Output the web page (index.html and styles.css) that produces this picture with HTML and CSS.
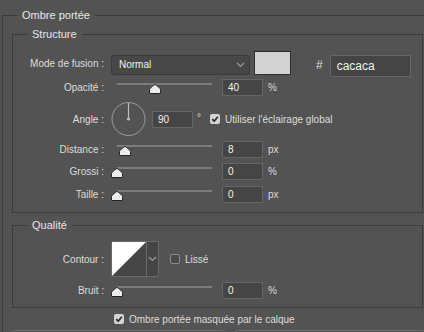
FILE: index.html
```html
<!DOCTYPE html>
<html lang="fr">
<head>
    <meta charset="UTF-8">
    <title>Style de calque - Ombre portée</title>
    <link rel="stylesheet" href="styles.css">
</head>
<body>
    <fieldset class="group outer">
        <legend>Ombre portée</legend>

        <fieldset class="group inner structure">
            <legend>Structure</legend>

            <div class="row row-mode">
                <label class="lbl">Mode de fusion :</label>
                <div class="select">
                    <span>Normal</span>
                    <svg class="chev" width="9" height="6" viewBox="0 0 9 6"><path d="M1 1 L4.5 4.5 L8 1" fill="none" stroke="#9a9a9a" stroke-width="1.2"/></svg>
                </div>
                <div class="swatch"></div>
                <span class="hash">#</span>
                <div class="field hex">cacaca</div>
            </div>

            <div class="row row-opacity">
                <label class="lbl">Opacité :</label>
                <div class="slider">
                    <div class="track">
                        <svg class="thumb" style="left: 40%" width="12" height="10" viewBox="0 0 12 10"><path d="M6 0.5 C7 0.5 11.5 4.5 11.5 5.5 V9 Q11.5 9.5 11 9.5 H1 Q0.5 9.5 0.5 9 V5.5 C0.5 4.5 5 0.5 6 0.5 Z" fill="#ececec" stroke="#262626"/></svg>
                    </div>
                </div>
                <div class="field num">40</div>
                <span class="unit">%</span>
            </div>

            <div class="row row-angle">
                <label class="lbl">Angle :</label>
                <svg class="dial" width="35" height="36" viewBox="0 0 35 36">
                    <circle cx="17.5" cy="18" r="16.5" fill="none" stroke="#9c9c9c" stroke-width="1"/>
                    <line x1="17.5" y1="18" x2="17.5" y2="2" stroke="#bdbdbd" stroke-width="1.2"/>
                    <circle cx="17.5" cy="18" r="1.6" fill="#bdbdbd"/>
                </svg>
                <div class="field num">90</div>
                <span class="deg">°</span>
                <span class="check on">
                    <svg width="10" height="10" viewBox="0 0 10 10"><path d="M2.2 5.2 L4.2 7.2 L7.8 2.8" fill="none" stroke="#303030" stroke-width="1.8"/></svg>
                </span>
                <span class="check-label">Utiliser l'éclairage global</span>
            </div>

            <div class="row row-distance">
                <label class="lbl">Distance :</label>
                <div class="slider">
                    <div class="track">
                        <svg class="thumb" style="left: 8%" width="12" height="10" viewBox="0 0 12 10"><path d="M6 0.5 C7 0.5 11.5 4.5 11.5 5.5 V9 Q11.5 9.5 11 9.5 H1 Q0.5 9.5 0.5 9 V5.5 C0.5 4.5 5 0.5 6 0.5 Z" fill="#ececec" stroke="#262626"/></svg>
                    </div>
                </div>
                <div class="field num">8</div>
                <span class="unit">px</span>
            </div>

            <div class="row">
                <label class="lbl">Grossi :</label>
                <div class="slider">
                    <div class="track">
                        <svg class="thumb" style="left: 0%" width="12" height="10" viewBox="0 0 12 10"><path d="M6 0.5 C7 0.5 11.5 4.5 11.5 5.5 V9 Q11.5 9.5 11 9.5 H1 Q0.5 9.5 0.5 9 V5.5 C0.5 4.5 5 0.5 6 0.5 Z" fill="#ececec" stroke="#262626"/></svg>
                    </div>
                </div>
                <div class="field num">0</div>
                <span class="unit">%</span>
            </div>

            <div class="row row-size">
                <label class="lbl">Taille :</label>
                <div class="slider">
                    <div class="track">
                        <svg class="thumb" style="left: 0%" width="12" height="10" viewBox="0 0 12 10"><path d="M6 0.5 C7 0.5 11.5 4.5 11.5 5.5 V9 Q11.5 9.5 11 9.5 H1 Q0.5 9.5 0.5 9 V5.5 C0.5 4.5 5 0.5 6 0.5 Z" fill="#ececec" stroke="#262626"/></svg>
                    </div>
                </div>
                <div class="field num">0</div>
                <span class="unit">px</span>
            </div>
        </fieldset>

        <fieldset class="group inner quality">
            <legend>Qualité</legend>

            <div class="row row-contour">
                <label class="lbl">Contour :</label>
                <div class="contour">
                    <svg class="curve" width="34" height="34" viewBox="0 0 34 34">
                        <rect width="34" height="34" fill="#464646"/>
                        <polygon points="0,0 34,0 0,34" fill="#ffffff"/>
                    </svg>
                    <div class="contour-arrow">
                        <svg width="9" height="6" viewBox="0 0 9 6"><path d="M1 1 L4.5 4.5 L8 1" fill="none" stroke="#9a9a9a" stroke-width="1.2"/></svg>
                    </div>
                </div>
                <span class="check off"></span>
                <span class="check-label">Lissé</span>
            </div>

            <div class="row row-noise">
                <label class="lbl">Bruit :</label>
                <div class="slider">
                    <div class="track">
                        <svg class="thumb" style="left: 0%" width="12" height="10" viewBox="0 0 12 10"><path d="M6 0.5 C7 0.5 11.5 4.5 11.5 5.5 V9 Q11.5 9.5 11 9.5 H1 Q0.5 9.5 0.5 9 V5.5 C0.5 4.5 5 0.5 6 0.5 Z" fill="#ececec" stroke="#262626"/></svg>
                    </div>
                </div>
                <div class="field num">0</div>
                <span class="unit">%</span>
            </div>
        </fieldset>

        <div class="row row-knockout">
            <span class="check on">
                <svg width="10" height="10" viewBox="0 0 10 10"><path d="M2.2 5.2 L4.2 7.2 L7.8 2.8" fill="none" stroke="#303030" stroke-width="1.8"/></svg>
            </span>
            <span class="check-label">Ombre portée masquée par le calque</span>
        </div>

        <div class="buttons">
            <div class="btn"></div>
            <div class="btn"></div>
        </div>
    </fieldset>
</body>
</html>
```

FILE: styles.css
```css
body {
    margin: 0;
    height: 332px;
    overflow: hidden;
    background-color: #535353;
    font-family: "Liberation Sans", Arial, sans-serif;
    font-size: 10px;
    color: #dcdcdc;
}
.group {
    margin: 0;
    padding: 0;
    border: 1px solid #3c3c3c;
    min-width: 0;
}
.group legend {
    margin-left: 14px;
    padding: 0 5px;
    line-height: 14px;
    font-size: 11px;
    color: #e6e6e6;
}
.outer {
    margin: 8px -40px 0 2px;
    border-right: none;
    border-bottom: none;
}
.inner {
    width: 411px;
    box-sizing: border-box;
    margin: 5px 0 0 9px;
}
.structure {
    padding-bottom: 9px;
}
.quality {
    padding-bottom: 8px;
}
.row {
    display: flex;
    align-items: center;
    height: 17px;
    margin-top: 5px;
}
.lbl {
    flex: none;
    width: 91px;
    margin-right: 7px;
    text-align: right;
}
.row-mode {
    height: 24px;
    margin-top: 10px;
}
.row-opacity {
    margin-top: 4px;
}
.row-angle {
    height: 36px;
    margin-top: 5px;
}
.row-distance {
    margin-top: 4px;
}
.row-size {
    margin-top: 6px;
}
.row-contour {
    height: 36px;
    margin-top: 9px;
}
.row-knockout {
    height: 14px;
    margin: 4px 0 0 111px;
}
.select {
    display: flex;
    align-items: center;
    justify-content: space-between;
    width: 139px;
    height: 20px;
    box-sizing: border-box;
    margin-top: 3px;
    padding: 0 4px 0 7px;
    border: 1px solid #3a3a3a;
    border-radius: 3px;
    background-color: #474747;
    color: #f0f0f0;
}
.swatch {
    width: 37px;
    height: 24px;
    box-sizing: border-box;
    margin-left: 4px;
    border: 1px solid #2e2e2e;
    background-color: #d2d2d2;
}
.hash {
    margin: 3px 7px 0 25px;
    font-size: 12px;
}
.field {
    box-sizing: border-box;
    border: 1px solid #656565;
    background-color: #454545;
    color: #f2f2f2;
}
.hex {
    width: 81px;
    height: 22px;
    margin-top: 5px;
    padding-left: 6px;
    line-height: 20px;
    font-size: 12px;
}
.num {
    width: 41px;
    height: 17px;
    padding-left: 5px;
    line-height: 15px;
}
.unit {
    margin-left: 5px;
}
.slider {
    flex: none;
    width: 101px;
    height: 17px;
    margin-right: 10px;
}
.track {
    position: relative;
    height: 2px;
    margin: 4px 0 0 6px;
    background-color: #7b7b7b;
}
.thumb {
    position: absolute;
    top: 1px;
    margin-left: -6px;
}
.dial {
    flex: none;
    margin-right: 6px;
}
.deg {
    margin: -4px 0 0 4px;
}
.check {
    flex: none;
    display: inline-flex;
    width: 10px;
    height: 10px;
    box-sizing: border-box;
    border-radius: 2px;
}
.check.on {
    background-color: #d4d4d4;
}
.check.off {
    border: 1px solid #8c8c8c;
    background-color: #4a4a4a;
}
.row-angle .check {
    margin-left: 9px;
}
.check-label {
    margin-left: 5px;
}
.contour {
    display: flex;
    width: 48px;
    height: 36px;
    box-sizing: border-box;
    border: 1px solid #6a6a6a;
    border-radius: 2px;
    background-color: #454545;
}
.curve {
    display: block;
}
.contour-arrow {
    flex: 1;
    display: flex;
    align-items: center;
    justify-content: center;
    border-left: 1px solid #6a6a6a;
}
.row-contour .check {
    margin-left: 11px;
}
.buttons {
    display: flex;
    gap: 10px;
    margin: 4px 0 0 9px;
}
.btn {
    width: 213px;
    height: 22px;
    box-sizing: border-box;
    border: 1px solid #6a6a6a;
    border-radius: 3px;
    background-color: #505050;
}
.btn + .btn {
    width: 190px;
}
```
